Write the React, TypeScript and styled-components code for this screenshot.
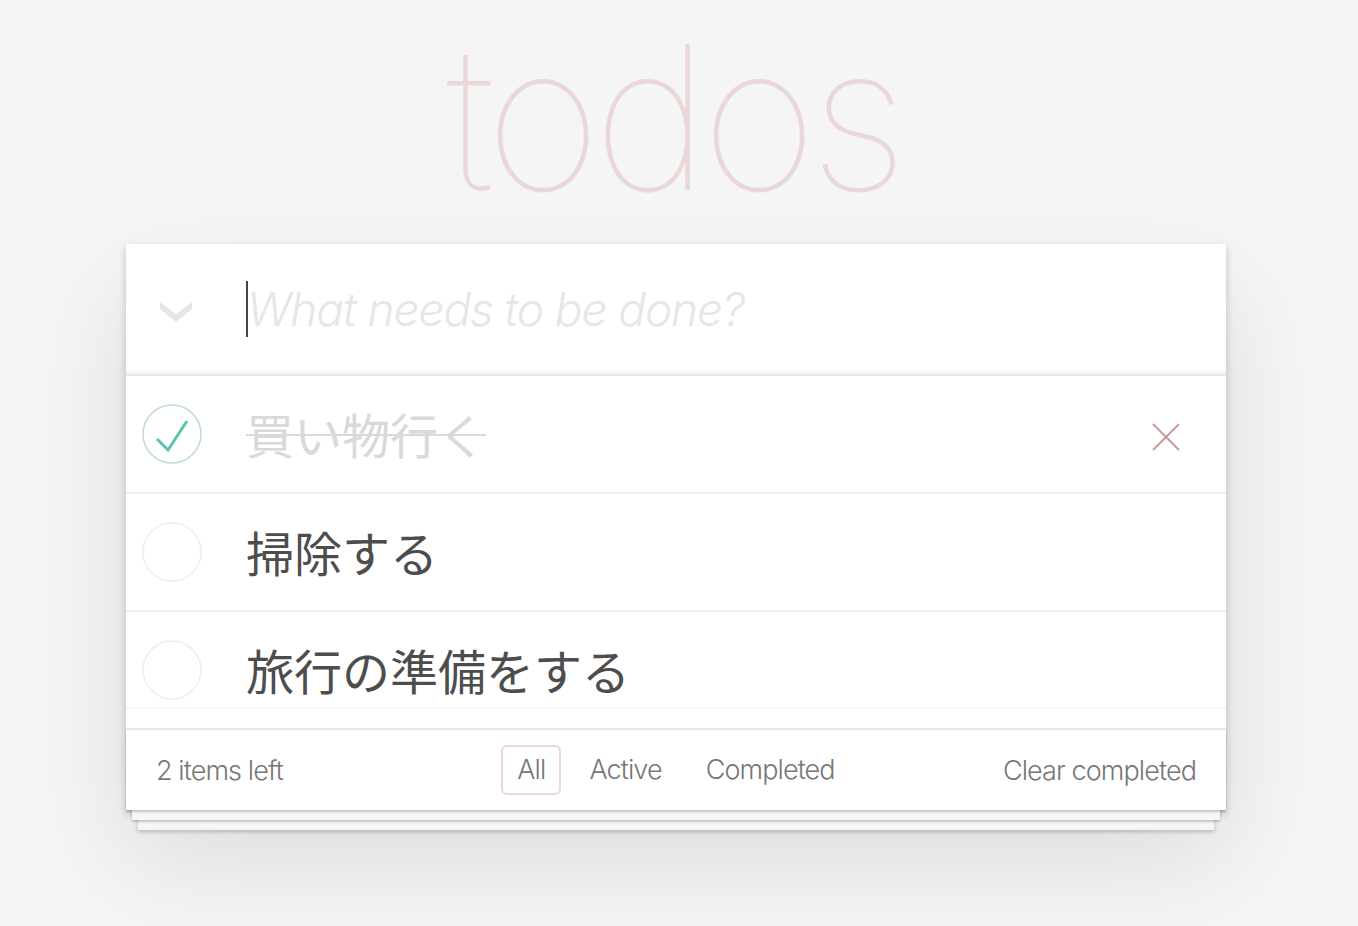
import React from 'react';
import styled, { createGlobalStyle } from 'styled-components';

type Todo = { id: number; title: string; completed: boolean };

const todos: Todo[] = [
  { id: 1, title: '買い物行く', completed: true },
  { id: 2, title: '掃除する', completed: false },
  { id: 3, title: '旅行の準備をする', completed: false },
];

const filters = ['All', 'Active', 'Completed'];

const GlobalStyle = createGlobalStyle`
  html, body {
    margin: 0;
    padding: 0;
  }
  body {
    background: #f5f5f5;
    color: #4d4d4d;
    font-family: Inter, "Noto Sans CJK JP", sans-serif;
    font-weight: 300;
    -webkit-font-smoothing: antialiased;
  }
`;

const Page = styled.div`
  padding: 0 6px 140px 0;
`;

const TodoApp = styled.section`
  width: 1100px;
  margin: 0 auto;
`;

const Title = styled.h1`
  margin: 0 0 10px;
  padding-right: 6px;
  font-size: 200px;
  line-height: 234px;
  font-weight: 100;
  letter-spacing: -8px;
  text-align: center;
  color: rgba(175, 47, 47, 0.15);
`;

const Card = styled.div`
  background: #fff;
  box-shadow: 0 4px 8px 0 rgba(0, 0, 0, 0.2), 0 50px 100px 0 rgba(0, 0, 0, 0.1);
`;

const Header = styled.header`
  display: flex;
  align-items: center;
  height: 130px;
  border-bottom: 2px solid #e6e6e6;
  box-shadow: inset 0 -4px 2px rgba(0, 0, 0, 0.03);
`;

const ToggleAll = styled.div`
  width: 120px;
  padding-left: 34px;
  padding-top: 6px;
  box-sizing: border-box;
  display: flex;
  align-items: center;
`;

const NewTodo = styled.div`
  display: flex;
  align-items: center;
  font-size: 46px;
  letter-spacing: -1.1px;
  font-style: italic;
  font-weight: 300;
  color: #e6e6e6;
`;

const Caret = styled.span`
  width: 2px;
  height: 56px;
  background: #444;
  margin-right: -1px;
`;

const List = styled.ul`
  list-style: none;
  margin: 0;
  padding: 0;
`;

const Item = styled.li`
  display: flex;
  align-items: center;
  height: 116px;
  border-bottom: 2px solid #ededed;

  &:last-child {
    border-bottom: none;
    box-shadow: inset 0 -19px 0 0 #fff, inset 0 -21px 0 0 #f6f6f6;
  }
`;

const Toggle = styled.svg`
  margin-left: 16px;
  flex-shrink: 0;
`;

const Label = styled.label<{ $completed: boolean }>`
  margin-left: 44px;
  font-family: "Noto Sans CJK JP", sans-serif;
  font-size: 48px;
  font-weight: 400;
  line-height: 1.4;
  color: ${(p) => (p.$completed ? '#d9d9d9' : '#4d4d4d')};
  text-decoration: ${(p) => (p.$completed ? 'line-through' : 'none')};
  text-decoration-thickness: 2px;
`;

const Destroy = styled.button`
  margin-left: auto;
  margin-right: 20px;
  width: 80px;
  height: 80px;
  padding: 0;
  border: 0;
  background: none;
  display: flex;
  align-items: center;
  justify-content: center;
  margin-top: 5px;
`;

const Footer = styled.footer`
  display: grid;
  grid-template-columns: 1fr auto 1fr;
  align-items: center;
  height: 80px;
  padding: 0 30px;
  border-top: 2px solid #e6e6e6;
  color: #777;
  font-size: 27px;
  letter-spacing: -0.9px;
  font-weight: 300;
  box-shadow: 0 2px 2px rgba(0, 0, 0, 0.2), 0 16px 0 -6px #f6f6f6,
    0 18px 2px -6px rgba(0, 0, 0, 0.2), 0 32px 0 -12px #f6f6f6,
    0 34px 4px -12px rgba(0, 0, 0, 0.2);
`;

const Count = styled.span`
  justify-self: start;
`;

const Filters = styled.ul`
  display: flex;
  list-style: none;
  margin: 0;
  padding: 0;
`;

const FilterItem = styled.li`
  margin: 0 6px;
`;

const FilterLink = styled.a<{ $selected: boolean }>`
  display: block;
  padding: 5px 14px;
  line-height: 36px;
  border: 2px solid ${(p) => (p.$selected ? 'rgba(175, 47, 47, 0.2)' : 'transparent')};
  border-radius: 6px;
  color: inherit;
  text-decoration: none;
`;

const ClearCompleted = styled.button`
  justify-self: end;
  border: 0;
  padding: 0;
  background: none;
  font: inherit;
  letter-spacing: inherit;
  color: inherit;
`;

const Chevron = () => (
  <svg width="32" height="20" viewBox="0 0 32 20">
    <polygon points="0,0 16,12 32,0 32,7 16,20 0,7" fill="#e6e6e6" />
  </svg>
);

const CheckCircle = ({ checked }: { checked: boolean }) => (
  <Toggle width="60" height="60" viewBox="0 0 60 60">
    <circle cx="30" cy="30" r="29" fill="none" stroke={checked ? '#bddad5' : '#ededed'} strokeWidth="1.5" />
    {checked && (
      <polyline points="15,35 26,46 45,17" fill="none" stroke="#5dc2af" strokeWidth="3" />
    )}
  </Toggle>
);

const Cross = () => (
  <svg width="28" height="28" viewBox="0 0 28 28">
    <path d="M1 1 L27 27 M27 1 L1 27" stroke="#cc9a9a" strokeWidth="2" />
  </svg>
);

export default function App() {
  const left = todos.filter((t) => !t.completed).length;
  return (
    <Page>
      <GlobalStyle />
      <TodoApp>
        <Title>todos</Title>
        <Card>
          <Header>
            <ToggleAll>
              <Chevron />
            </ToggleAll>
            <NewTodo>
              <Caret />
              What needs to be done?
            </NewTodo>
          </Header>
          <List>
            {todos.map((todo) => (
              <Item key={todo.id}>
                <CheckCircle checked={todo.completed} />
                <Label $completed={todo.completed}>{todo.title}</Label>
                {todo.completed && (
                  <Destroy>
                    <Cross />
                  </Destroy>
                )}
              </Item>
            ))}
          </List>
          <Footer>
            <Count>{left} items left</Count>
            <Filters>
              {filters.map((f) => (
                <FilterItem key={f}>
                  <FilterLink href="#" $selected={f === 'All'}>{f}</FilterLink>
                </FilterItem>
              ))}
            </Filters>
            <ClearCompleted>Clear completed</ClearCompleted>
          </Footer>
        </Card>
      </TodoApp>
    </Page>
  );
}
